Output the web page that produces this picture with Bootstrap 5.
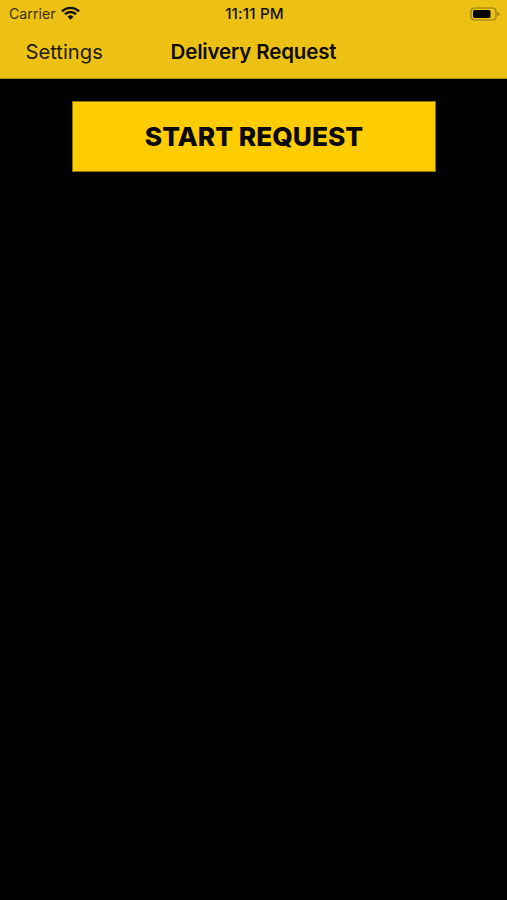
<!DOCTYPE html>
<html lang="en">
<head>
<meta charset="utf-8">
<title>Delivery Request</title>
<link href="https://cdn.jsdelivr.net/npm/bootstrap@5.3.0/dist/css/bootstrap.min.css" rel="stylesheet">
<style>
html, body { height: 100%; }
body { background: #000; font-family: Inter, "Liberation Sans", sans-serif; overflow: hidden; }
.app-head { background: #ecc113; height: 79px; color: #111; border-bottom: 1px solid #a88d1c; }
.status-row { height: 27px; padding: 0 7px 0 9px; font-size: 14.2px; font-weight: 400; }
.status-side { width: 170px; gap: 5px; }
.status-time { font-size: 15.2px; font-weight: 500; letter-spacing: .15px; padding-top: 1px; }
.carrier-name { color: #3a3208; }
.title-row { height: 51px; }
.back-label { left: 25.5px; font-size: 20.2px; font-weight: 400; color: #211c06; }
.page-title { font-size: 20.5px; font-weight: 600; letter-spacing: -.15px; color: #0c0b04; }
.main-wrap { padding: 22px 0 0 1px; }
.start-btn { width: 364px; height: 71px; border-radius: 0; background: #ffcc00; border: 1px solid #8d7408; color: #0a0a0a; font-size: 26.3px; font-weight: 800; padding-top: 6px; --bs-btn-hover-bg: #ffcc00; --bs-btn-hover-color: #0a0a0a; --bs-btn-hover-border-color: #8d7408; }
</style>
</head>
<body>
<header class="app-head d-flex flex-column">
  <div class="status-row d-flex align-items-center justify-content-between">
    <div class="status-side d-flex align-items-center">
      <span class="carrier-name">Carrier</span>
      <svg width="19" height="15" viewBox="0 0 20 15" aria-hidden="true"><path d="M1 5.2a13 13 0 0 1 18 0" fill="none" stroke="#111" stroke-width="2.6"/><path d="M4.2 8.3a8.4 8.4 0 0 1 11.6 0" fill="none" stroke="#111" stroke-width="2.6"/><path d="M10 14.2 6.9 10.9a4.4 4.4 0 0 1 6.2 0z" fill="#111"/></svg>
    </div>
    <span class="status-time">11:11 PM</span>
    <div class="status-side d-flex justify-content-end align-items-center">
      <svg width="30" height="14" viewBox="0 0 30 14" aria-hidden="true"><rect x="1" y="1" width="25" height="12" rx="3.5" fill="none" stroke="#8f7a14" stroke-width="1.2"/><rect x="3" y="3" width="17.5" height="8" rx="1.8" fill="#000"/><path d="M27.5 5v4c1.1-.4 1.8-1.1 1.8-2s-.7-1.6-1.8-2z" fill="#8f7a14"/></svg>
    </div>
  </div>
  <div class="title-row position-relative d-flex align-items-center justify-content-center">
    <span class="back-label position-absolute">Settings</span>
    <span class="page-title">Delivery Request</span>
  </div>
</header>
<main class="main-wrap d-flex justify-content-center">
  <button type="button" class="btn start-btn d-flex align-items-center justify-content-center">START REQUEST</button>
</main>
<script src="https://cdn.jsdelivr.net/npm/bootstrap@5.3.0/dist/js/bootstrap.bundle.min.js"></script>
</body>
</html>
